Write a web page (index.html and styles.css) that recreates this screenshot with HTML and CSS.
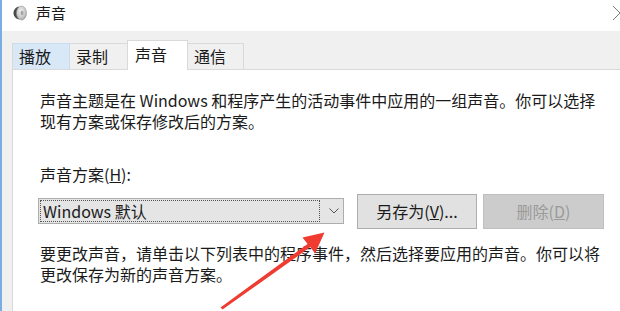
FILE: index.html
```html
<!DOCTYPE html>
<html lang="zh-CN">
<head>
<meta charset="utf-8">
<title>声音</title>
<link rel="stylesheet" href="styles.css">
</head>
<body>
<div class="window">
  <div class="titlebar">
    <svg class="app-icon" width="14" height="16" viewBox="0 0 14 16">
      <defs>
        <radialGradient id="cone" cx="0.45" cy="0.4" r="0.7">
          <stop offset="0" stop-color="#f4f4f4"/>
          <stop offset="0.6" stop-color="#c9c9c9"/>
          <stop offset="1" stop-color="#8e8e8e"/>
        </radialGradient>
      </defs>
      <path d="M6 1.5 C2 2.5 0.5 5.5 0.5 8 C0.5 10.5 2 13.5 6 14.5 Z" fill="#4a4a4a"/>
      <ellipse cx="8.5" cy="8" rx="5" ry="7" fill="url(#cone)" stroke="#9a9a9a" stroke-width="0.6"/>
      <ellipse cx="9" cy="8" rx="1.6" ry="2.3" fill="#a8a8a8"/>
    </svg>
    <span class="title">声音</span>
    <svg class="close" width="16" height="16" viewBox="0 0 16 16">
      <path d="M1 1 L15 15 M15 1 L1 15" stroke="#7a7a7a" stroke-width="1" fill="none"/>
    </svg>
  </div>
  <div class="tabs">
    <div class="tab tab-hover w58">播放</div>
    <div class="tab w58">录制</div>
    <div class="tab tab-active">声音</div>
    <div class="tab w56">通信</div>
  </div>
  <div class="panel">
    <p class="desc"><span class="line">声音主题是在 Windows 和程序产生的活动事件中应用的一组声音。你可以选择</span><span class="line">现有方案或保存修改后的方案。</span></p>
    <div class="label">声音方案(<u>H</u>):</div>
    <div class="scheme-row">
      <div class="combo">
        <div class="combo-value">Windows 默认</div>
        <svg class="chev" width="10" height="6" viewBox="0 0 10 6"><path d="M0.5 0.5 L5 5 L9.5 0.5" stroke="#555" stroke-width="1" fill="none"/></svg>
      </div>
      <div class="btn">另存为(<u>V</u>)...</div>
      <div class="btn btn-disabled">删除(<u>D</u>)</div>
    </div>
    <p class="desc desc2"><span class="line">要更改声音，请单击以下列表中的程序事件，然后选择要应用的声音。你可以将</span><span class="line">更改保存为新的声音方案。</span></p>
  </div>
  <svg class="arrow" width="620" height="311" viewBox="0 0 620 311">
    <path d="M220.5 307.5 L307.6 243.9 L302.5 237.5 L324.5 232.5 L315 253.5 L310.4 247.1 L222.5 309.5 Z" fill="#ef3b30"/>
  </svg>
</div>
</body>
</html>
```

FILE: styles.css
```css
html, body {
  margin: 0;
  padding: 0;
}
body {
  width: 620px;
  height: 311px;
  overflow: hidden;
  font-family: "Noto Sans CJK SC", "Noto Sans", sans-serif;
  color: #1a1a1a;
}
.window {
  position: relative;
  height: 311px;
  background: #f0f0f0;
  border-left: 2px solid #7aaee0;
  box-sizing: border-box;
}
.titlebar {
  height: 31px;
  background: #ffffff;
  display: flex;
  align-items: center;
  padding-left: 11px;
}
.app-icon {
  flex: none;
  margin-top: -5px;
}
.title {
  margin-left: 9px;
  font-size: 15px;
  line-height: 20px;
  margin-top: -6px;
}
.close {
  margin-left: auto;
  margin-right: -8px;
  margin-top: -6px;
}
.tabs {
  height: 38px;
  display: flex;
  align-items: flex-end;
  padding-left: 10px;
  position: relative;
  z-index: 1;
}
.tab {
  box-sizing: border-box;
  height: 26px;
  border: 1px solid #d9d9d9;
  border-bottom: none;
  border-left: none;
  background: #f0f0f0;
  font-size: 16px;
  line-height: 25px;
  padding-left: 6px;
  color: #1a1a1a;
}
.tab:first-child {
  border-left: 1px solid #d9d9d9;
}
.w58 { width: 58px; }
.w56 { width: 56px; }
.tab-hover {
  background: #d8e8f7;
  border-color: #c7dcf0;
}
.tab-active {
  width: 61px;
  height: 30px;
  background: #ffffff;
  margin-bottom: -1px;
  padding-left: 7px;
  line-height: 27px;
  border-left: 1px solid #d9d9d9;
  margin-left: -1px;
}
.panel {
  margin-left: 10px;
  height: 242px;
  background: #ffffff;
  border-top: 1px solid #d9d9d9;
  border-left: 1px solid #d9d9d9;
  padding-left: 27px;
  box-sizing: border-box;
}
.desc {
  margin: 0;
  padding-top: 20px;
  font-size: 16px;
  white-space: nowrap;
}
.line {
  display: block;
  height: 21px;
  line-height: 21px;
}
.label {
  margin-top: 32px;
  font-size: 16px;
  line-height: 21px;
}
.scheme-row {
  margin-top: 9px;
  display: flex;
  align-items: center;
  height: 35px;
}
.combo {
  box-sizing: border-box;
  margin-left: -2px;
  width: 306px;
  height: 26px;
  margin-top: -2px;
  background: #e5e5e5;
  border: 1px solid #adadad;
  display: flex;
  align-items: center;
  padding: 1px;
}
.combo-value {
  box-sizing: border-box;
  width: 280px;
  height: 22px;
  border: 1px dotted #555;
  font-size: 16px;
  line-height: 20px;
  padding-left: 2px;
}
.chev {
  margin-left: 9px;
}
.btn {
  box-sizing: border-box;
  width: 120px;
  height: 35px;
  margin-left: 13px;
  background: #e1e1e1;
  border: 1px solid #adadad;
  font-size: 16px;
  line-height: 32px;
  text-align: center;
}
.btn-disabled {
  width: 121px;
  margin-left: 6px;
  background: #cccccc;
  border-color: #bfbfbf;
  color: #9a9a9a;
}
.desc2 {
  padding-top: 14px;
}
.arrow {
  position: absolute;
  left: -2px;
  top: 0;
  pointer-events: none;
}
```
